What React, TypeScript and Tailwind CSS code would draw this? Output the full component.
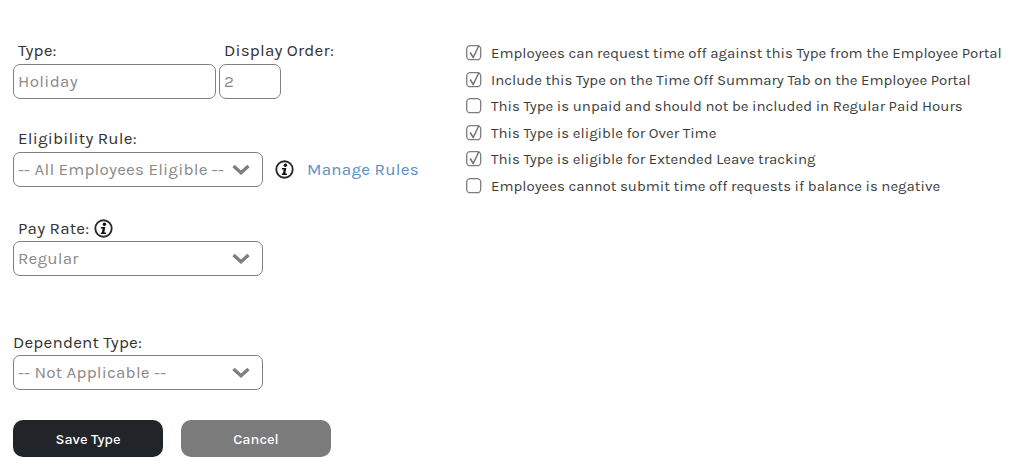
const font = "font-['Karla','Noto_Sans','Open_Sans',sans-serif]";

const InfoIcon = () => (
  <svg width="19" height="19" viewBox="0 0 19 19" className="shrink-0">
    <circle cx="9.5" cy="9.5" r="8.2" fill="#fff" stroke="#2b2b2b" strokeWidth="1.9" />
    <circle cx="10.4" cy="5.3" r="1.7" fill="#111" />
    <path d="M6.9 8.1h4.4l-1 5.3h1.7v1.5H6.8v-1.5h1.1l.8-3.8H6.9z" fill="#111" />
  </svg>
);

const Chevron = () => (
  <svg width="18" height="12" viewBox="0 0 18 12" className="absolute right-[12px] top-[11px]">
    <path d="M1.5 2l7.5 6.8L16.5 2" fill="none" stroke="#7f7f7f" strokeWidth="3.4" />
  </svg>
);

const Check = ({ on }: { on: boolean }) => (
  <svg width="16" height="16" viewBox="0 0 16 16" className="shrink-0">
    <rect x="0.7" y="0.7" width="14" height="14" rx="3.5" fill="#fff" stroke="#7d7d7d" strokeWidth="1.3" />
    {on && <path d="M4.2 7.5l3 5L13 0.5" fill="none" stroke="#707070" strokeWidth="1.5" />}
  </svg>
);

const Select = ({ value }: { value: string }) => (
  <div className="relative w-[250px] h-[35px] border border-[#808080] rounded-[7px] pl-[4px] text-[#8a8a8a] text-[17px] leading-[33px] tracking-[0.2px] whitespace-nowrap">
    {value}
    <Chevron />
  </div>
);

const options = [
  { label: "Employees can request time off against this Type from the Employee Portal", on: true },
  { label: "Include this Type on the Time Off Summary Tab on the Employee Portal", on: true },
  { label: "This Type is unpaid and should not be included in Regular Paid Hours", on: false },
  { label: "This Type is eligible for Over Time", on: true },
  { label: "This Type is eligible for Extended Leave tracking", on: true },
  { label: "Employees cannot submit time off requests if balance is negative", on: false },
];

export default function App() {
  return (
    <div className={`${font} w-[1012px] h-[467px] bg-white flex text-[#333] overflow-hidden`}>
      <div className="w-[466px] shrink-0 pl-[13px] pt-[37px]">
        {/* type + order */}
        <div className="flex gap-[3px]">
          <div>
            <div className="pl-[5px] text-[17px] leading-[27px] tracking-[0.2px]">Type:</div>
            <div className="w-[203px] h-[35px] border border-[#808080] rounded-[7px] pl-[4px] text-[#8a8a8a] text-[17px] leading-[33px] tracking-[0.3px]">Holiday</div>
          </div>
          <div>
            <div className="pl-[5px] text-[17px] leading-[27px] tracking-[0.2px] whitespace-nowrap w-[62px]">Display Order:</div>
            <div className="w-[62px] h-[35px] border border-[#808080] rounded-[7px] pl-[4px] text-[#8a8a8a] text-[17px] leading-[33px]">2</div>
          </div>
        </div>

        <div className="pl-[5px] mt-[26px] text-[17px] leading-[27px] tracking-[0.2px]">Eligibility Rule:</div>
        <div className="flex items-center">
          <Select value="-- All Employees Eligible --" />
          <div className="ml-[12px]"><InfoIcon /></div>
          <a className="ml-[13px] text-[#5b8fc0] text-[17px] tracking-[0.25px] whitespace-nowrap">Manage Rules</a>
        </div>

        <div className="pl-[5px] mt-[29px] h-[25px] flex items-center gap-[5px] text-[17px] tracking-[0.2px]">
          Pay Rate: <InfoIcon />
        </div>
        <Select value="Regular" />

        <div className="mt-[53px] text-[17px] leading-[26px] tracking-[0.2px]">Dependent Type:</div>
        <Select value="-- Not Applicable --" />

        <div className="flex gap-[18px] mt-[30px]">
          <button className="w-[150px] h-[37px] rounded-[10px] bg-[#212529] text-white text-[14.5px] font-medium pt-[2px]">Save Type</button>
          <button className="w-[150px] h-[37px] rounded-[10px] bg-[#7b7b7b] text-white text-[14.5px] font-medium pt-[2px]">Cancel</button>
        </div>
      </div>

      <div className="pt-[40px] flex flex-col">
        {options.map((o) => (
          <div key={o.label} className="flex items-center gap-[9px] h-[26.5px] text-[15px] text-[#3c3c3c] whitespace-nowrap">
            <Check on={o.on} />
            {o.label}
          </div>
        ))}
      </div>
    </div>
  );
}
